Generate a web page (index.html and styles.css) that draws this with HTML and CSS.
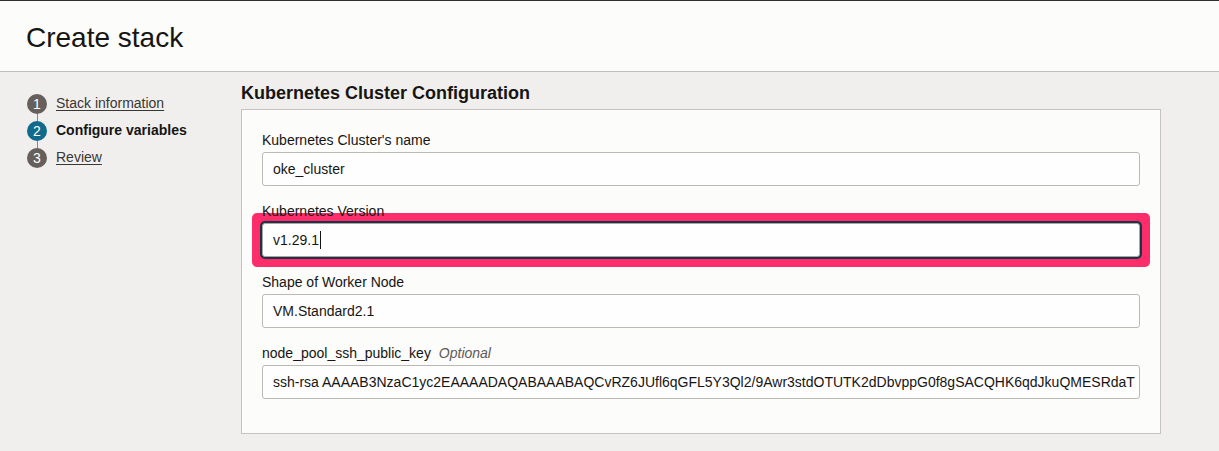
FILE: index.html
```html
<!DOCTYPE html>
<html lang="en">
<head>
<meta charset="utf-8">
<title>Create stack</title>
<link rel="stylesheet" href="styles.css">
</head>
<body>
<header class="page-header">
  <h1 class="page-title">Create stack</h1>
</header>
<div class="layout">
  <nav class="steps">
    <div class="step">
      <span class="step-num done">1</span>
      <a class="step-link" href="#">Stack information</a>
    </div>
    <div class="step">
      <span class="step-num current">2</span>
      <span class="step-current">Configure variables</span>
    </div>
    <div class="step">
      <span class="step-num last">3</span>
      <a class="step-link" href="#">Review</a>
    </div>
  </nav>
  <main class="main">
    <h2 class="section-title">Kubernetes Cluster Configuration</h2>
    <section class="panel">
      <div class="field">
        <div class="label">Kubernetes Cluster's name</div>
        <div class="input">oke_cluster</div>
      </div>
      <div class="field">
        <div class="label">Kubernetes Version</div>
        <div class="highlight">
          <div class="input focused">v1.29.1<span class="caret"></span></div>
        </div>
      </div>
      <div class="field">
        <div class="label">Shape of Worker Node</div>
        <div class="input">VM.Standard2.1</div>
      </div>
      <div class="field">
        <div class="label">node_pool_ssh_public_key <span class="optional">Optional</span></div>
        <div class="input">ssh-rsa AAAAB3NzaC1yc2EAAAADAQABAAABAQCvRZ6JUfl6qGFL5Y3Ql2/9Awr3stdOTUTK2dDbvppG0f8gSACQHK6qdJkuQMESRdaT</div>
      </div>
    </section>
  </main>
</div>
</body>
</html>
```

FILE: styles.css
```css
* {
  box-sizing: border-box;
}

body {
  margin: 0;
  background: #f1efed;
  font-family: "Liberation Sans", Arial, sans-serif;
  color: #161513;
}

.page-header {
  background: #fcfcfb;
  border-top: 1px solid #312d2a;
  border-bottom: 1px solid #c3c0bc;
  height: 72px;
  padding: 21px 26px 0;
}

.page-title {
  margin: 0;
  font-size: 28px;
  line-height: 32px;
  font-weight: 400;
  color: #161513;
}

.layout {
  display: grid;
  grid-template-columns: 215px 920px;
  padding: 10px 0 0 26px;
}

.steps {
  padding-top: 8px;
  padding-left: 1px;
}

.step {
  display: flex;
  align-items: center;
  height: 27px;
  font-size: 14px;
  line-height: 27px;
}

.step-num {
  position: relative;
  flex: none;
  width: 20px;
  height: 20px;
  border-radius: 50%;
  background: #665f5b;
  color: #fff;
  font-size: 14px;
  line-height: 20px;
  text-align: center;
  margin-right: 9px;
}

.step-num::after {
  content: "";
  position: absolute;
  left: 9.5px;
  top: 20px;
  width: 1px;
  height: 7px;
  background: #8a847f;
}

.step-num.last::after {
  display: none;
}

.step-num.current {
  background: #0f6a8b;
}

.step-link {
  color: #3a3632;
  text-decoration: underline;
  text-underline-offset: 2px;
}

.step-current {
  font-weight: 700;
  color: #161513;
}

.main {
  min-width: 0;
}

.section-title {
  margin: 0 0 5px;
  font-size: 18px;
  line-height: 22px;
  font-weight: 700;
  color: #161513;
}

.panel {
  background: #fcfcfb;
  border: 1px solid #c6c3bf;
  padding: 22px 20px 17px 20px;
}

.field {
  margin-bottom: 17px;
}

.label {
  font-size: 14px;
  line-height: 17px;
  margin-bottom: 3px;
  color: #161513;
}

.optional {
  font-style: italic;
  color: #5f5a55;
  margin-left: 4px;
}

.input {
  height: 34px;
  border: 1px solid #bcb8b4;
  border-radius: 3px;
  background: #fefefe;
  padding: 0 10px;
  font-size: 14px;
  line-height: 32px;
  color: #161513;
  white-space: nowrap;
  overflow: hidden;
}

.highlight {
  margin: -10px -10px -10px;
  padding: 10px;
  background: #fd2d6b;
  border-radius: 5px;
}

.input.focused {
  border-color: #a9a6a2;
  box-shadow: 0 0 0 2px #1f3346;
  overflow: visible;
}

.caret {
  display: inline-block;
  width: 1px;
  height: 18px;
  background: #161513;
  vertical-align: -4px;
  margin-left: 1px;
}
```
